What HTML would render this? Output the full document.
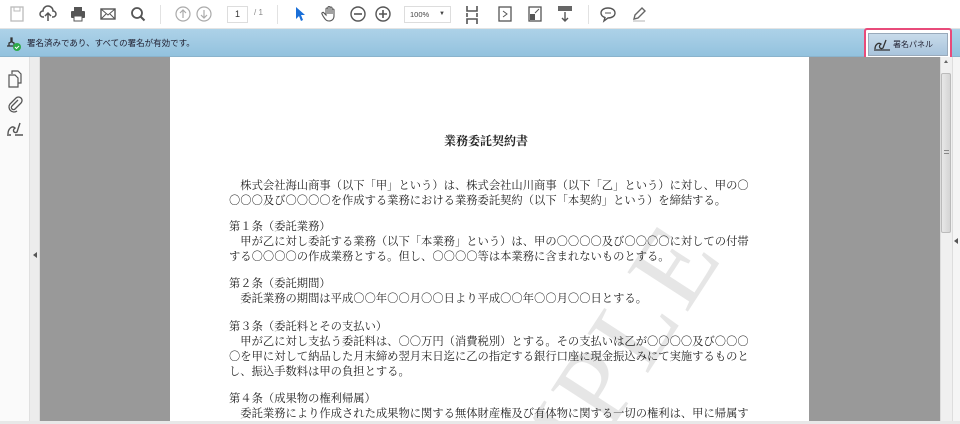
<!DOCTYPE html>
<html><head><meta charset="utf-8"><style>
*{margin:0;padding:0;box-sizing:border-box}
html,body{width:960px;height:424px;overflow:hidden}
body{background:#fff;font-family:"Liberation Sans","Noto Sans CJK JP",sans-serif;position:relative}
.tb{position:absolute;left:0;top:0;width:960px;height:29px;background:#fff;border-bottom:1px solid #e4e4e4}
.tb svg{position:absolute;top:5px}
.bar{position:absolute;left:0;top:29px;width:960px;height:28px;background:linear-gradient(#add2e8,#93c2de);border-bottom:1px solid #8ab3cc}
.bar .t{position:absolute;left:27px;top:8px;font-size:8.5px;color:#223}
.sb{position:absolute;left:0;top:57px;width:30px;height:364px;background:#fafafa;border-right:1px solid #e0e0e0}
.strip{position:absolute;left:30px;top:57px;width:10px;height:364px;background:#ececec;border-right:1px solid #ddd}
.gray{position:absolute;top:57px;height:364px;background:#999}
.page{position:absolute;left:170px;top:57px;width:639px;height:364px;background:#fff}
.ln{position:absolute;left:229px;font-size:11.3px;line-height:14px;color:#222;white-space:nowrap;font-family:"Noto Serif CJK SC","Liberation Serif",serif}
.scroll{position:absolute;left:940px;top:57px;width:12px;height:364px;background:#f0f0f0;border-left:1px solid #ddd}
.thumb{position:absolute;left:941px;top:73px;width:10px;height:160px;background:linear-gradient(90deg,#e8e8e8,#d4d4d4);border:1px solid #bbb;border-radius:2px}
.rstrip{position:absolute;left:952px;top:57px;width:8px;height:364px;background:#f5f5f5;border-left:1px solid #ddd}
.bottom{position:absolute;left:0;top:421px;width:960px;height:3px;background:#e8e8e8}
</style></head><body>
<div class="tb">
<svg style="left:9px" width="16" height="18" viewBox="0 0 16 18"><rect x="2" y="2" width="12" height="14" fill="none" stroke="#bbb" stroke-width="1.3"/><rect x="5" y="2" width="6" height="4" fill="none" stroke="#bbb"/></svg>
<svg style="left:39px" width="18" height="18" viewBox="0 0 18 18"><path d="M5 12H4a3 3 0 0 1 0-6 5 5 0 0 1 10 0 3 3 0 0 1 0 6h-1M9 16V8M6 11l3-3 3 3" fill="none" stroke="#555" stroke-width="1.5"/></svg>
<svg style="left:69px" width="18" height="18" viewBox="0 0 18 18"><rect x="5" y="2" width="8" height="4" fill="#555"/><rect x="2" y="6" width="14" height="7" rx="1" fill="#555"/><rect x="5" y="11" width="8" height="5" fill="#fff" stroke="#555"/></svg>
<svg style="left:99px" width="18" height="18" viewBox="0 0 18 18"><rect x="2" y="4" width="14" height="10" fill="none" stroke="#555" stroke-width="1.4"/><path d="M2 4l7 6 7-6M2 14l5-5M16 14l-5-5" fill="none" stroke="#555"/></svg>
<svg style="left:129px" width="18" height="18" viewBox="0 0 18 18"><circle cx="8" cy="8" r="5" fill="none" stroke="#555" stroke-width="1.8"/><path d="M11.5 11.5l4 4" stroke="#555" stroke-width="2"/></svg>
<div style="position:absolute;left:160px;top:5px;width:1px;height:19px;background:#e2e2e2"></div>
<svg style="left:174px" width="18" height="18" viewBox="0 0 18 18"><circle cx="9" cy="9" r="7" fill="none" stroke="#aaa" stroke-width="1.2"/><path d="M9 13V5M6 8l3-3 3 3" fill="none" stroke="#aaa" stroke-width="1.2"/></svg>
<svg style="left:195px" width="18" height="18" viewBox="0 0 18 18"><circle cx="9" cy="9" r="7" fill="none" stroke="#aaa" stroke-width="1.2"/><path d="M9 5v8M6 10l3 3 3-3" fill="none" stroke="#aaa" stroke-width="1.2"/></svg>
<div style="position:absolute;left:227px;top:6px;width:21px;height:17px;border:1px solid #ddd;font-size:9px;color:#333;text-align:center;line-height:15px">1</div>
<div style="position:absolute;left:254px;top:8px;font-size:8px;color:#888">/ 1</div>
<div style="position:absolute;left:277px;top:5px;width:1px;height:19px;background:#e2e2e2"></div>
<svg style="left:292px" width="16" height="18" viewBox="0 0 16 18"><path d="M4 2l9 8h-4l2 5-2 1-2-5-3 3z" fill="#1a6fd8"/></svg>
<svg style="left:321px" width="18" height="18" viewBox="0 0 18 18"><path d="M5 10V4a1 1 0 0 1 2 0v5V2.5a1 1 0 0 1 2 0V9V3a1 1 0 0 1 2 0v6V5a1 1 0 0 1 2 0v6c0 3-2 5-5 5s-4-2-6-5l-1-2a1 1 0 0 1 2-1z" fill="none" stroke="#555" stroke-width="1.1"/></svg>
<svg style="left:349px" width="18" height="18" viewBox="0 0 18 18"><circle cx="9" cy="9" r="7" fill="none" stroke="#555" stroke-width="1.4"/><path d="M5 9h8" stroke="#555" stroke-width="1.6"/></svg>
<svg style="left:374px" width="18" height="18" viewBox="0 0 18 18"><circle cx="9" cy="9" r="7" fill="none" stroke="#555" stroke-width="1.4"/><path d="M5 9h8M9 5v8" stroke="#555" stroke-width="1.6"/></svg>
<div style="position:absolute;left:404px;top:6px;width:47px;height:17px;border:1px solid #ddd;font-size:7.5px;color:#444;line-height:15px;padding-left:5px">100%<span style="position:absolute;right:5px;font-size:6px">▼</span></div>
<svg style="left:464px" width="16" height="20" viewBox="0 0 16 20"><path d="M3 1v5h10V1M3 19v-5h10v5M3 8v4M13 8v4" fill="none" stroke="#555" stroke-width="1.6"/></svg>
<svg style="left:497px" width="16" height="18" viewBox="0 0 16 18"><rect x="2" y="2" width="12" height="14" fill="none" stroke="#555" stroke-width="1.3"/><path d="M6 6l4 3-4 3" fill="none" stroke="#555"/></svg>
<svg style="left:527px" width="16" height="18" viewBox="0 0 16 18"><rect x="2" y="2" width="12" height="14" fill="none" stroke="#555" stroke-width="1.3"/><rect x="3" y="9" width="5" height="6" fill="#555"/><path d="M8 8l4-4" stroke="#555"/></svg>
<svg style="left:556px" width="18" height="18" viewBox="0 0 18 18"><rect x="2" y="1" width="14" height="5" fill="#666"/><path d="M9 7v9M6 13l3 3 3-3" fill="none" stroke="#555" stroke-width="1.4"/></svg>
<div style="position:absolute;left:588px;top:5px;width:1px;height:19px;background:#e2e2e2"></div>
<svg style="left:599px" width="18" height="18" viewBox="0 0 18 18"><path d="M9 3c4 0 7 2 7 5s-3 5-7 5l-4 3 1-3.5C3 11.5 2 10 2 8c0-3 3-5 7-5z" fill="none" stroke="#555" stroke-width="1.4"/><path d="M6 8h6" stroke="#555"/></svg>
<svg style="left:630px" width="18" height="18" viewBox="0 0 18 18"><path d="M4 14l1-4 7-7 3 3-7 7z" fill="none" stroke="#666" stroke-width="1.4"/><path d="M3 16h12" stroke="#ccc" stroke-width="1.5"/></svg>
</div>
<div class="bar">
<svg style="position:absolute;left:5px;top:8px" width="20" height="14" viewBox="0 0 20 14"><path d="M2 9h10M4 9V6l2-1V1h1v4l2 1v3" fill="none" stroke="#333" stroke-width="1.3"/><circle cx="12" cy="10" r="4" fill="#2eaa4a"/><path d="M10 10l1.5 1.5L14 9" fill="none" stroke="#fff" stroke-width="1"/></svg>
<div class="t">署名済みであり、すべての署名が有効です。</div>
<div style="position:absolute;left:864px;top:-1px;width:88px;height:34px;border:2.5px solid #e84b7a;border-radius:3px;background:#fff"></div>
<div style="position:absolute;left:868px;top:4px;width:80px;height:23px;background:linear-gradient(#c8dbea,#a9c4dc);border:1px solid #9ab;font-size:8px;color:#223;line-height:21px;padding-left:24px">署名パネル</div>
<svg style="position:absolute;left:872px;top:8px" width="20" height="16" viewBox="0 0 20 16"><path d="M3 12c0-4 3-7 6-5-3 2-1 6 2 4l3-8M2 13h16" fill="none" stroke="#333" stroke-width="1.3"/></svg>
</div>
<div class="sb">
<svg style="position:absolute;left:7px;top:13px" width="16" height="18" viewBox="0 0 16 18"><path d="M5 4V1h6l3 3v9h-3M2 5h6l3 3v9H2z" fill="none" stroke="#555" stroke-width="1.2"/></svg>
<svg style="position:absolute;left:7px;top:38px" width="16" height="18" viewBox="0 0 16 18"><path d="M11 5l-6 6a2 2 0 0 0 3 3l6-6a3.5 3.5 0 0 0-5-5l-6 6a5 5 0 0 0 7 7" fill="none" stroke="#555" stroke-width="1.3"/></svg>
<svg style="position:absolute;left:5px;top:63px" width="20" height="18" viewBox="0 0 20 18"><path d="M3 14c0-5 4-9 7-6-3 2-1 6 2 4l3-9M2 15h4M10 15h8" fill="none" stroke="#555" stroke-width="1.4"/></svg>
</div>
<div class="strip"><div style="position:absolute;left:3px;top:195px;border-right:4px solid #555;border-top:3px solid transparent;border-bottom:3px solid transparent"></div></div>
<div class="gray" style="left:40px;width:130px"></div>
<div class="gray" style="left:809px;width:131px"></div>
<div class="page"></div>
<svg style="position:absolute;left:170px;top:57px" width="639" height="364"><text x="0" y="0" transform="translate(300,590) rotate(-57)" font-family="Liberation Serif,serif" font-size="110" fill="#e6e6e6" letter-spacing="6">SAMPLE</text></svg>
<div class="ln" style="left:444px;top:134px;font-weight:bold;font-size:12px">業務委託契約書</div>
<div class="ln" style="top:178px">&#12288;株式会社海山商事（以下「甲」という）は、株式会社山川商事（以下「乙」という）に対し、甲の○</div>
<div class="ln" style="top:193px">○○○及び○○○○を作成する業務における業務委託契約（以下「本契約」という）を締結する。</div>
<div class="ln" style="top:219px">第１条（委託業務）</div>
<div class="ln" style="top:234px">&#12288;甲が乙に対し委託する業務（以下「本業務」という）は、甲の○○○○及び○○○○に対しての付帯</div>
<div class="ln" style="top:249px">する○○○○の作成業務とする。但し、○○○○等は本業務に含まれないものとする。</div>
<div class="ln" style="top:276px">第２条（委託期間）</div>
<div class="ln" style="top:291px">&#12288;委託業務の期間は平成○○年○○月○○日より平成○○年○○月○○日とする。</div>
<div class="ln" style="top:319px">第３条（委託料とその支払い）</div>
<div class="ln" style="top:334px">&#12288;甲が乙に対し支払う委託料は、○○万円（消費税別）とする。その支払いは乙が○○○○及び○○○</div>
<div class="ln" style="top:349px">○を甲に対して納品した月末締め翌月末日迄に乙の指定する銀行口座に現金振込みにて実施するものと</div>
<div class="ln" style="top:364px">し、振込手数料は甲の負担とする。</div>
<div class="ln" style="top:391px">第４条（成果物の権利帰属）</div>
<div class="ln" style="top:406px">&#12288;委託業務により作成された成果物に関する無体財産権及び有体物に関する一切の権利は、甲に帰属す</div>
<div class="scroll"><div style="position:absolute;left:3px;top:3px;border-bottom:3px solid #666;border-left:2px solid transparent;border-right:2px solid transparent"></div></div>
<div class="thumb"><div style="position:absolute;left:2px;top:76px;width:5px;height:4px;border-top:1px solid #888;border-bottom:1px solid #888"></div></div>
<div class="rstrip"><div style="position:absolute;left:1px;top:181px;border-right:4px solid #555;border-top:3px solid transparent;border-bottom:3px solid transparent"></div></div>
<div class="bottom"></div>
</body></html>
